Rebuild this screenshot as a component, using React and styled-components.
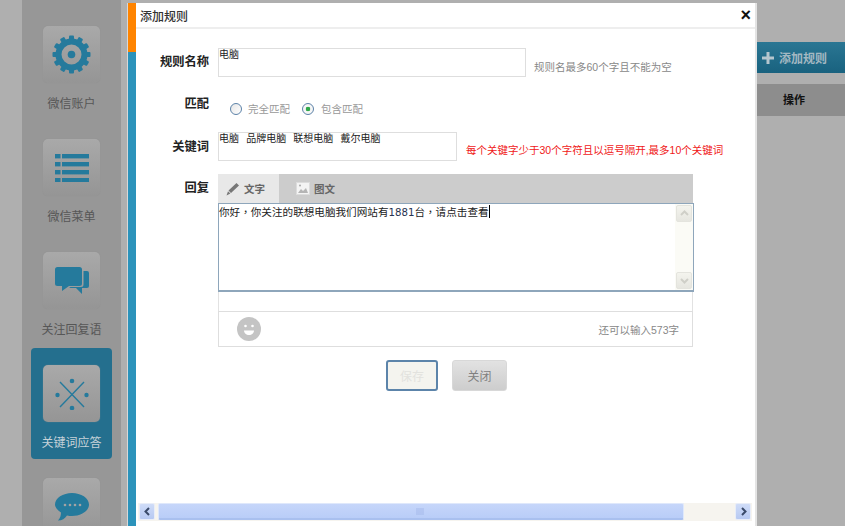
import React from 'react';
import styled, { createGlobalStyle } from 'styled-components';

const Global = createGlobalStyle`
  html, body { margin: 0; padding: 0; background: #afafaf; }
  body { font-family: "Liberation Sans", "Noto Sans CJK SC", sans-serif; font-size: 12px; }
  * { box-sizing: border-box; }
`;

const Page = styled.div`
  position: relative;
  width: 845px;
  height: 526px;
  overflow: hidden;
  display: flex;
  padding-left: 22px;
  background: #afafaf;
`;
const Sidebar = styled.nav`
  width: 100px;
  height: 526px;
  flex: none;
  background: #979797;
  border-right: 1px solid #afafaf;
  display: flex;
  flex-direction: column;
  align-items: center;
  padding-top: 9px;
  overflow: hidden;
`;
const NavItem = styled.div`
  width: 81px;
  height: 111px;
  flex: none;
  margin-bottom: 2px;
  display: flex;
  flex-direction: column;
  align-items: center;
  padding-top: 17px;
  background: ${p => (p.$active ? '#246f8e' : 'transparent')};
  border-radius: 4px;
  color: ${p => (p.$active ? '#c6d2d8' : '#565656')};
`;
const Tile = styled.div`
  width: 57px;
  height: 57px;
  flex: none;
  border-radius: 5px;
  background: linear-gradient(#a9a9a9, #959595);
  box-shadow: 0 0 1px #8a8a8a;
  display: flex;
  align-items: center;
  justify-content: center;
`;
const NavLabel = styled.div`
  margin-top: 14px;
  font-size: 12px;
  line-height: 14px;
  white-space: nowrap;
`;
const Main = styled.main`
  flex: 1;
  display: flex;
  flex-direction: column;
  align-items: flex-end;
  padding-top: 42px;
`;
const AddButton = styled.div`
  width: 88px;
  height: 31px;
  display: flex;
  align-items: center;
  gap: 5px;
  padding-left: 5px;
  background: linear-gradient(#2a7693, #19627f);
  color: #a3b8c2;
  font-size: 12px;
  font-weight: 700;
`;
const TableHead = styled.div`
  width: 88px;
  height: 32px;
  margin-top: 11px;
  background: #8d8d8d;
  padding: 7px 0 0 26px;
  font-weight: 700;
  font-size: 11px;
  color: #111;
`;

const Modal = styled.div`
  position: absolute;
  left: 127px;
  top: 3px;
  width: 630px;
  height: 523px;
  background: #fff;
  border-right: 2px solid #e4e4e4;
  border-left: 1px solid #d8d8d8;
  display: flex;
`;
const Strip = styled.div`
  width: 8px;
  flex: none;
  background: linear-gradient(#ff8400 0, #ff8400 49px, #2c93bb 49px);
`;
const ModalBody = styled.div`
  flex: 1;
  min-width: 0;
  display: flex;
  flex-direction: column;
`;
const TitleBar = styled.header`
  height: 26px;
  flex: none;
  display: flex;
  align-items: center;
  justify-content: space-between;
  padding: 0 4px 0 4px;
  border-bottom: 2px solid #eeeeee;
  font-size: 12px;
  font-weight: 500;
  color: #333;
`;
const CloseX = styled.span`
  font-size: 18px;
  font-weight: 700;
  color: #111;
  line-height: 1;
`;
const Form = styled.form`
  flex: 1;
  padding-top: 19px;
  display: flex;
  flex-direction: column;
`;
const Row = styled.div`
  display: flex;
  align-items: flex-start;
  height: ${p => p.$h}px;
  flex: none;
`;
const Label = styled.label`
  width: 73px;
  flex: none;
  text-align: right;
  font-size: 12.25px;
  font-weight: 700;
  color: #222;
  line-height: 16px;
  padding-top: ${p => p.$top}px;
`;
const TextBox = styled.div`
  width: ${p => p.$w}px;
  height: 29px;
  flex: none;
  margin-left: 9px;
  border: 1px solid #dedede;
  font-size: 10px;
  word-spacing: 0.8px;
  line-height: 11px;
  color: #222;
  white-space: pre;
`;
const Hint = styled.span`
  margin-left: ${p => p.$ml}px;
  padding-top: ${p => p.$top}px;
  line-height: 16px;
  font-size: 10.5px;
  white-space: nowrap;
  color: ${p => p.$color || '#888'};
`;
const RadioGroup = styled.div`
  display: flex;
  align-items: center;
  margin-left: 21px;
  padding-top: 4px;
  color: #999;
  font-size: 10.5px;
  line-height: 16px;
`;
const Radio = styled.span`
  width: 12px;
  height: 12px;
  border-radius: 50%;
  flex: none;
  border: 1px solid #5c82a8;
  background: ${p => (p.$on ? 'radial-gradient(circle, #2fa84a 0, #2fa84a 2px, #f6f6f6 2.6px)' : 'linear-gradient(135deg, #e6e6e6, #fff)')};
  margin-right: ${p => (p.$on ? '7px' : '6px')};
`;
const RadioText = styled.span`
  margin-right: ${p => p.$mr}px;
  padding-top: 1px;
`;
const Editor = styled.div`
  margin-left: 9px;
  width: 476px;
  flex: none;
`;
const Tabs = styled.div`
  height: 29px;
  background: #cccccc;
  display: flex;
  width: 475px;
`;
const Tab = styled.div`
  width: 61px;
  display: flex;
  align-items: center;
  gap: 4px;
  padding-left: ${p => p.$pl}px;
  background: ${p => (p.$active ? '#e8e8e8' : 'transparent')};
  color: #666;
  font-size: 10.5px;
  font-weight: 700;
`;
const TextArea = styled.div`
  height: 89px;
  width: 476px;
  border: 1px solid #8ea6bb;
  border-bottom-width: 2px;
  display: flex;
  justify-content: space-between;
  line-height: 16px;
  color: #222;
`;
const Typed = styled.div`
  white-space: pre;
  font-family: "Noto Sans CJK TC", sans-serif;
  font-size: 10.6px;
`;
const Digits = styled.span`
  font-family: "DejaVu Sans", sans-serif;
  font-size: 10.2px;
  color: #26324f;
`;
const Caret = styled.span`
  display: inline-block;
  width: 1px;
  height: 13px;
  background: #000;
  vertical-align: -2px;
`;
const VBar = styled.div`
  width: 18px;
  background: #fbfbf6;
  display: flex;
  flex-direction: column;
  justify-content: space-between;
  padding: 1px;
`;
const VBtn = styled.div`
  height: 17px;
  background: linear-gradient(#f4f4ee, #e6e6e0);
  border: 1px solid #e4e4de;
  border-radius: 2px;
  display: flex;
  align-items: center;
  justify-content: center;
`;
const Spacer = styled.div`
  height: 19px;
  width: 475px;
  border-left: 1px solid #e2e2e2;
  border-right: 1px solid #e2e2e2;
`;
const EditorFoot = styled.div`
  height: 36px;
  width: 475px;
  border: 1px solid #dedede;
  display: flex;
  align-items: center;
  justify-content: space-between;
  padding: 0 13px 0 18px;
  color: #888;
  font-size: 10.5px;
`;
const Actions = styled.div`
  display: flex;
  gap: 14px;
  margin: 14px 0 0 250px;
`;
const Btn = styled.button`
  height: 31px;
  width: ${p => p.$w}px;
  padding: 0;
  font-family: inherit;
  font-size: 12px;
  border-radius: 3px;
  border: ${p => (p.$primary ? '2px solid #5c84aa' : '1px solid #d8d8d8')};
  background: ${p => (p.$primary ? '#f4f4ef' : 'linear-gradient(#e2e2e2, #cdcdcd)')};
  color: ${p => (p.$primary ? '#e2e2de' : '#808080')};
`;
const HScroll = styled.div`
  margin: auto 3px 5px 2px;
  height: 18px;
  flex: none;
  background: #f6f4ef;
  display: flex;
  gap: 3px;
  padding: 0 1px;
`;
const HBtn = styled.div`
  width: 16px;
  height: 17px;
  flex: none;
  background: linear-gradient(#cfdcf8, #b7c9f2);
  border: 1px solid #e8edf8;
  border-radius: 2px;
  display: flex;
  align-items: center;
  justify-content: center;
  margin-left: ${p => (p.$right ? 'auto' : '0')};
`;
const HThumb = styled.div`
  width: 526px;
  height: 17px;
  background: linear-gradient(#c6d6fa, #b9cdf8);
  border: 1px solid #dfe8fb;
  border-bottom: 2px solid #a9c0ef;
  border-radius: 2px;
  display: flex;
  align-items: center;
  justify-content: center;
  padding-right: 2px;
`;

const Gear = () => (
  <svg width="39" height="39" viewBox="0 0 39 39" fill="#257a9c">
    {[...Array(12)].map((_, i) => (
      <rect key={i} x="17" y="0.5" width="5" height="7" rx="1" transform={`rotate(${i * 30} 19.5 19.5)`} />
    ))}
    <path fillRule="evenodd" d="M19.5 3.5a16 16 0 1 0 0 32 16 16 0 0 0 0-32zm0 6a10 10 0 1 1 0 20 10 10 0 0 1 0-20z" />
    <circle cx="19.5" cy="19.5" r="3.8" />
  </svg>
);
const ListIcon = () => (
  <svg width="34" height="28" viewBox="0 0 34 28" fill="#257a9c">
    <rect x="0" y="0" width="5.5" height="4.4" /><rect x="7" y="0" width="27" height="4.4" />
    <rect x="0" y="8" width="5.5" height="4.4" /><rect x="7" y="8" width="27" height="4.4" />
    <rect x="0" y="16" width="5.5" height="4.4" /><rect x="7" y="16" width="27" height="4.4" />
    <rect x="0" y="24" width="5.5" height="4.4" /><rect x="7" y="24" width="27" height="4.4" />
  </svg>
);
const Chats = () => (
  <svg width="34" height="28" viewBox="0 0 34 28" fill="#257a9c">
    <path d="M2.5 0h22A2.5 2.5 0 0 1 27 2.5v14a2.5 2.5 0 0 1-2.5 2.5H14l-7 5v-5H2.5A2.5 2.5 0 0 1 0 16.5v-14A2.5 2.5 0 0 1 2.5 0z" />
    <path d="M28.5 4H32a2 2 0 0 1 2 2v13a2 2 0 0 1-2 2h-5v6l-6-6h-7l1.5-1H26a2.5 2.5 0 0 0 2.5-2.5z" />
  </svg>
);
const Cross = () => (
  <svg width="34" height="32" viewBox="0 0 34 32" fill="#257a9c">
    <path d="M5 4l24 25M29 4L5 29" stroke="#257a9c" strokeWidth="1.4" />
    <circle cx="17" cy="3" r="2.3" /><circle cx="17" cy="30" r="2.3" />
    <circle cx="2.5" cy="17" r="2.2" /><circle cx="31.5" cy="17" r="2.2" />
  </svg>
);
const Bubble = () => (
  <svg width="34" height="28" viewBox="0 0 34 28" fill="#257a9c">
    <path d="M17 0c9 0 17 5 17 11.5S26 23 17 23c-2 0-3 0-5-.5-2 3-5 5-9 5 2-2 3-5 3-8-3-2-6-5-6-8C0 5 8 0 17 0z" />
    <g fill="#a3a3a3"><circle cx="10" cy="12" r="1.3" /><circle cx="15" cy="12" r="1.3" /><circle cx="20" cy="12" r="1.3" /><circle cx="25" cy="12" r="1.3" /></g>
  </svg>
);
const Pencil = () => (
  <svg width="14" height="14" viewBox="0 0 14 14" fill="#777">
    <path d="M10.5 1l2.5 2.5-8 7.5-2.5-2.5zM2 9.3L4.4 11.6 0.5 13.5z" />
  </svg>
);
const Pic = () => (
  <svg width="14" height="13" viewBox="0 0 14 13">
    <rect x="0.5" y="0.5" width="13" height="12" fill="#f4f4f4" stroke="#dcdcdc" />
    <path d="M2 11l3-4 2 2 3-3 2 5z" fill="#b5b5b5" /><circle cx="4" cy="3.5" r="1" fill="#aaa" />
  </svg>
);
const Smile = () => (
  <svg width="24" height="24" viewBox="0 0 24 24">
    <circle cx="12" cy="12" r="12" fill="#c4c4c4" />
    <circle cx="8.5" cy="9" r="1.3" fill="#fff" /><circle cx="15.5" cy="9" r="1.3" fill="#fff" />
    <path d="M7 13.5h10c0 2.6-2.2 4.5-5 4.5s-5-1.900-5-4.500z" fill="#fff" />
  </svg>
);
const Chevron = ({ d, color, w = 2 }) => (
  <svg width="9" height="9" viewBox="0 0 9 9" fill="none" stroke={color} strokeWidth={w}><path d={d} /></svg>
);

const items = [
  ['微信账户', <Gear />],
  ['微信菜单', <ListIcon />],
  ['关注回复语', <Chats />],
  ['关键词应答', <Cross />, true],
  ['', <Bubble />],
];

export default function App() {
  return (
    <Page>
      <Global />
      <Sidebar>
        {items.map(([label, icon, active], i) => (
          <NavItem key={i} $active={active}>
            <Tile>{icon}</Tile>
            <NavLabel>{label}</NavLabel>
          </NavItem>
        ))}
      </Sidebar>
      <Main>
        <AddButton>
          <svg width="12" height="12" viewBox="0 0 12 12" fill="#b5c6ce"><path d="M4.5 0h3v4.5H12v3H7.5V12h-3V7.5H0v-3h4.5z" /></svg>
          添加规则
        </AddButton>
        <TableHead>操作</TableHead>
      </Main>
      <Modal>
        <Strip />
        <ModalBody>
          <TitleBar>添加规则<CloseX>×</CloseX></TitleBar>
          <Form>
            <Row $h={48}>
              <Label $top={6}>规则名称</Label>
              <TextBox $w={308}>电脑</TextBox>
              <Hint $ml={8} $top={11}>规则名最多60个字且不能为空</Hint>
            </Row>
            <Row $h={36}>
              <Label $top={0}>匹配</Label>
              <RadioGroup>
                <Radio /><RadioText $mr={12}>完全匹配</RadioText>
                <Radio $on /><RadioText>包含匹配</RadioText>
              </RadioGroup>
            </Row>
            <Row $h={42}>
              <Label $top={7}>关键词</Label>
              <TextBox $w={239}>电脑  品牌电脑  联想电脑  戴尔电脑</TextBox>
              <Hint $ml={9} $top={10} $color="#f01818">每个关键字少于30个字符且以逗号隔开,最多10个关键词</Hint>
            </Row>
            <Row $h={172}>
              <Label $top={6}>回复</Label>
              <Editor>
                <Tabs>
                  <Tab $active $pl={8}><Pencil />文字</Tab>
                  <Tab $pl={17}><Pic />图文</Tab>
                </Tabs>
                <TextArea>
                  <Typed>你好，你关注的联想电脑我们网站有<Digits>1881</Digits>台，请点击查看<Caret /></Typed>
                  <VBar>
                    <VBtn><Chevron d="M1 6l3.5-3.5L8 6" color="#cfcfc8" /></VBtn>
                    <VBtn><Chevron d="M1 3l3.5 3.5L8 3" color="#cfcfc8" /></VBtn>
                  </VBar>
                </TextArea>
                <Spacer />
                <EditorFoot><Smile /><span>还可以输入573字</span></EditorFoot>
              </Editor>
            </Row>
            <Actions>
              <Btn $primary $w={52} type="button">保存</Btn>
              <Btn $w={55} type="button">关闭</Btn>
            </Actions>
          </Form>
          <HScroll>
            <HBtn><Chevron d="M6 1L2.5 4.5 6 8" color="#3a4a6a" /></HBtn>
            <HThumb>
              <svg width="8" height="7" viewBox="0 0 8 7" stroke="#a5b9ea"><path d="M1 0v7M3 0v7M5 0v7M7 0v7" /></svg>
            </HThumb>
            <HBtn $right><Chevron d="M3 1l3.5 3.5L3 8" color="#3a4a6a" /></HBtn>
          </HScroll>
        </ModalBody>
      </Modal>
    </Page>
  );
}
